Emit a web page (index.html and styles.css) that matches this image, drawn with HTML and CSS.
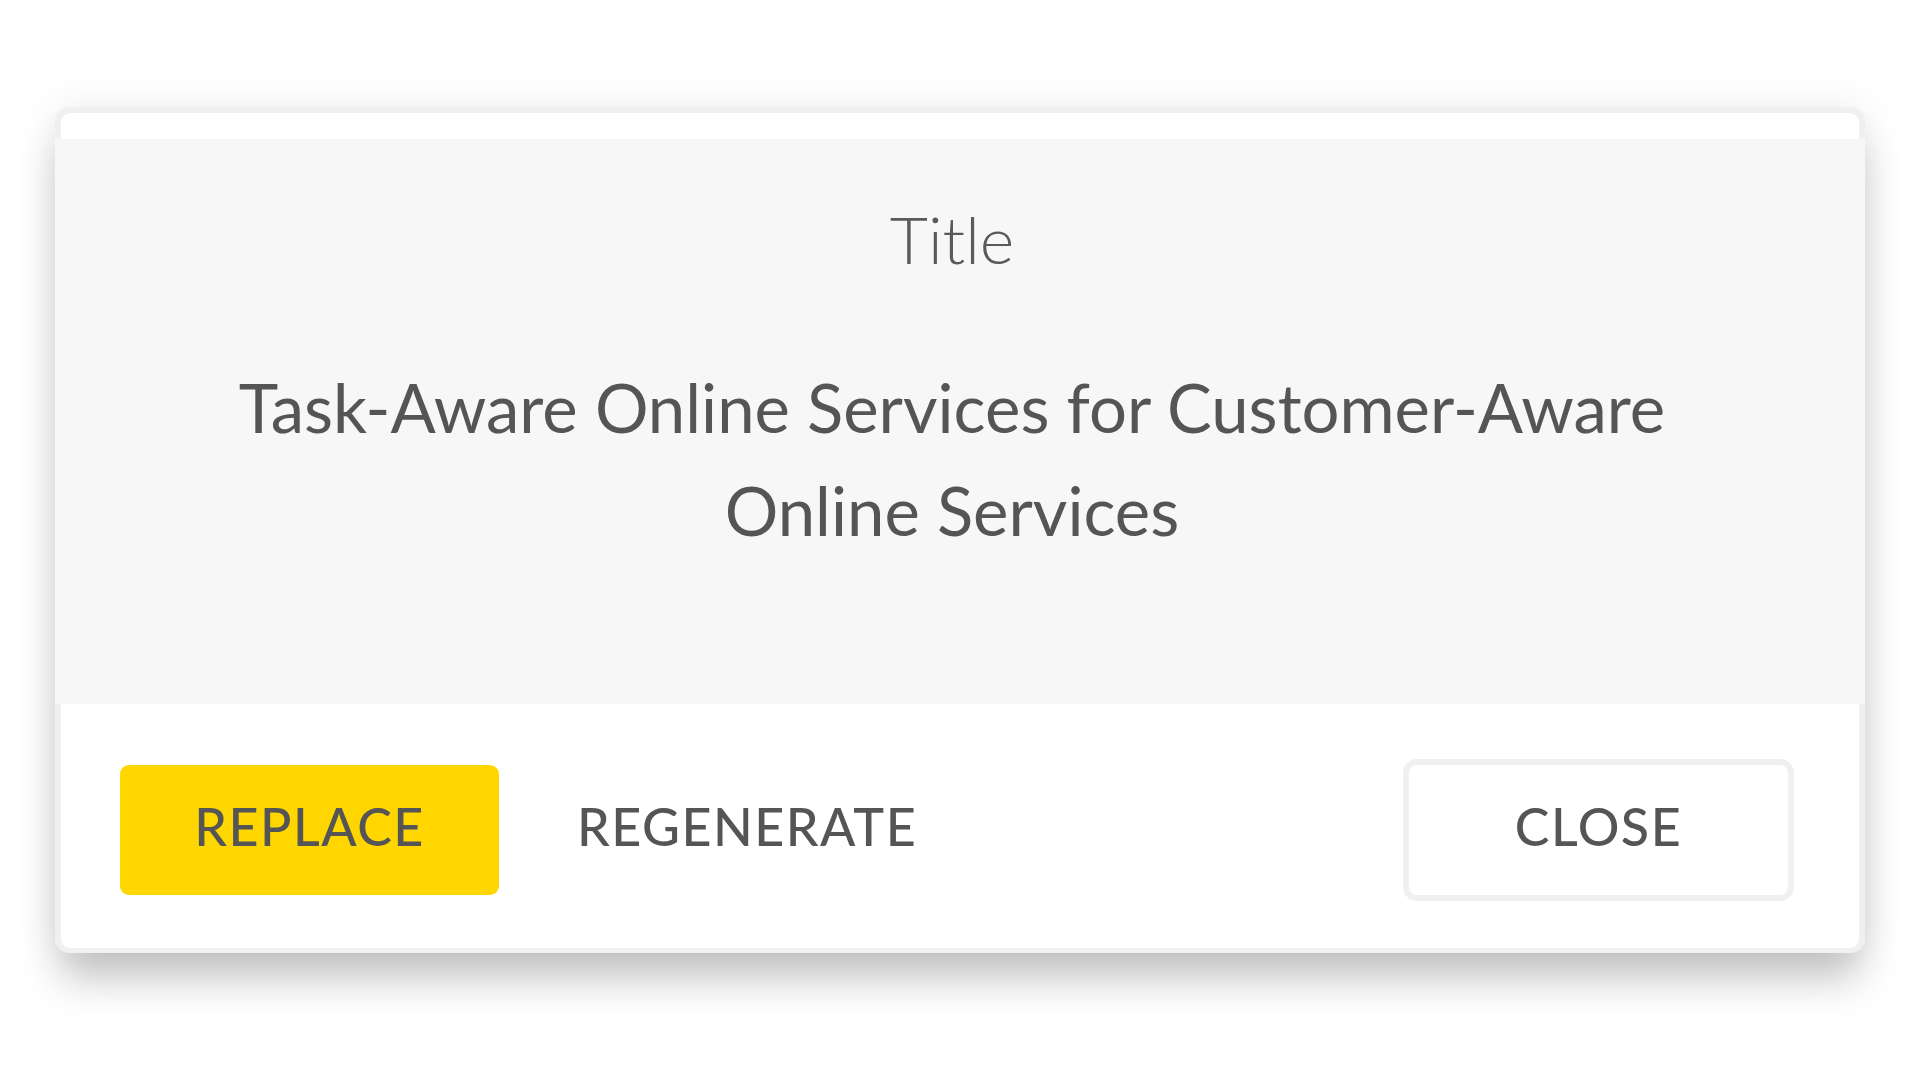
FILE: index.html
```html
<!DOCTYPE html>
<html lang="en">
<head>
    <meta charset="UTF-8">
    <meta name="viewport" content="width=device-width, initial-scale=1.0">
    <title>Title Suggestion</title>
    <link rel="stylesheet" href="styles.css">
</head>
<body>
    <div class="page">
        <div class="dialog">
            <div class="dialog-top"></div>

            <div class="dialog-body">
                <h2 class="dialog-label">Title</h2>
                <p class="dialog-text">Task-Aware Online Services for Customer-Aware Online Services</p>
            </div>

            <div class="dialog-footer">
                <button class="btn btn-primary">REPLACE</button>
                <button class="btn btn-text">REGENERATE</button>
                <button class="btn btn-outline">CLOSE</button>
            </div>
        </div>
    </div>
</body>
</html>
```

FILE: styles.css
```css
* {
    margin: 0;
    padding: 0;
    box-sizing: border-box;
    font-family: 'Lato', 'Noto Sans', sans-serif;
}

html, body {
    min-height: 100%;
}

body {
    background-color: #ffffff;
    color: #555555;
}

.page {
    display: flex;
    justify-content: center;
    padding-top: 107px;
    padding-bottom: 120px;
}

.dialog {
    width: 1810px;
    padding: 6px 6px 5px;
    background-color: #f0f0f0;
    border-radius: 14px;
    box-shadow: 0 32px 40px -6px rgba(0, 0, 0, 0.22), 0 0 40px rgba(0, 0, 0, 0.08);
}

.dialog-top {
    height: 26px;
    background-color: #ffffff;
    border-radius: 9px 9px 0 0;
}

.dialog-body {
    height: 565px;
    margin: 0 -6px;
    padding: 60px 16px 0 0;
    background-color: #f7f7f7;
    text-align: center;
}

.dialog-label {
    font-size: 66px;
    font-weight: 300;
    line-height: 80px;
    color: #5a5a5a;
}

.dialog-text {
    max-width: 1480px;
    margin: 77px auto 0;
    font-size: 67px;
    font-weight: 400;
    line-height: 103px;
    color: #555555;
}

.dialog-footer {
    height: 244px;
    display: flex;
    align-items: center;
    padding: 7px 65px 0 59px;
    background-color: #ffffff;
    border-radius: 0 0 9px 9px;
}

.btn {
    height: 130px;
    padding-bottom: 7px;
    border: none;
    background: none;
    font-size: 52px;
    font-weight: 500;
    letter-spacing: 1.5px;
    color: #555555;
    cursor: pointer;
}

.btn-primary {
    width: 379px;
    background-color: #ffd600;
    border-radius: 9px;
}

.btn-text {
    margin-left: 78px;
}

.btn-outline {
    width: 391px;
    height: 142px;
    margin-left: auto;
    border: 6px solid #f0f0f0;
    border-radius: 14px;
    background-color: #ffffff;
}
```
